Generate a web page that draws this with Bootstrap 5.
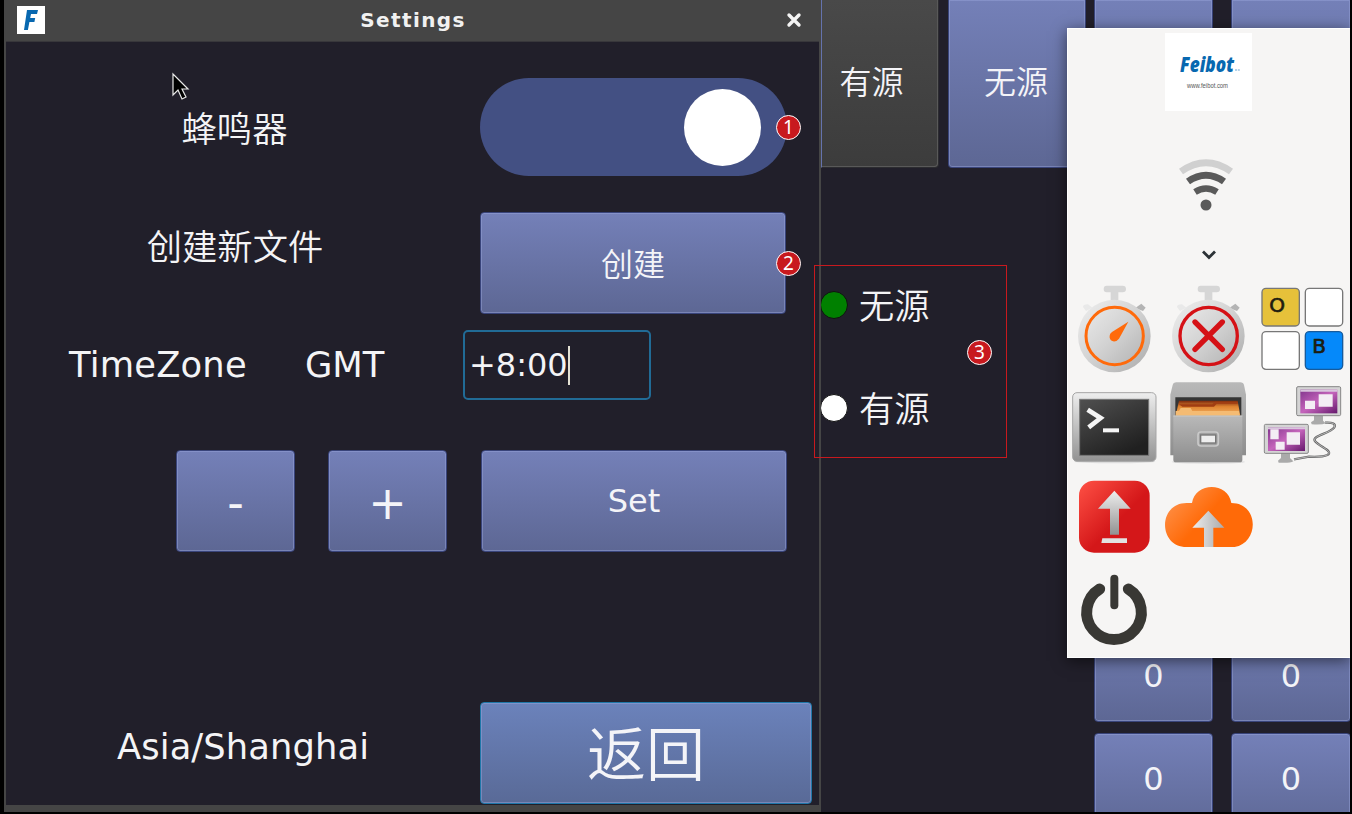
<!DOCTYPE html>
<html lang="zh-CN">
<head>
<meta charset="utf-8">
<meta name="viewport" content="width=device-width, initial-scale=1">
<title>Settings</title>
<link rel="stylesheet" href="https://cdn.jsdelivr.net/npm/bootstrap@5.3.0/dist/css/bootstrap.min.css">
<style>
  body { width: 1352px; height: 814px; background: #000; color: #f4f4f6; font-family: "DejaVu Sans", "Noto Sans CJK SC", sans-serif; font-size: 35.3px; line-height: 1; }
  .cjk { font-family: "Noto Sans CJK SC", sans-serif; font-weight: 350; }
  .win { position: absolute; top: 0; height: 812px; background: #211f2a; }
  /* raised button shared by both windows */
  .key { display: flex; align-items: center; justify-content: center; flex: none; padding: 0; border: 1px solid #39447a; border-radius: 4px; color: #f4f4f8; font-size: 32px; line-height: 1; background: linear-gradient(#7480b8, #5d6794); box-shadow: inset 0 0 0 1px rgba(150,162,215,.5); height: 102px; }
  .key.cjk { padding-bottom: 3px; }
  .key-dark { background: linear-gradient(#494949, #3c3c3c); border-color: #2c2c30; border-left-color: #6573ad; box-shadow: inset -1px -1px 0 #595959; border-radius: 0 0 4px 0; }
  .key-top { height: 168px; border-top: 0; border-top-left-radius: 0; border-top-right-radius: 0; }
  .key-top.cjk { padding-bottom: 7px; }
  .main-app { left: 821px; width: 529px; }
  .modes { width: 265px; gap: 9px; }
  .choice { height: 36px; gap: 11px; }
  .choice b { font-weight: inherit; padding-bottom: 3px; }
  .dot { width: 28px; height: 28px; margin-left: -1px; border: 1px solid #111; border-radius: 50%; background: #fff; }
  .dot.on { background: #008000; }
  .pads { display: grid; grid-template-columns: 119px 120px; column-gap: 18px; margin-left: 8px; }
  .pads-low { margin-top: 451px; row-gap: 11px; }
  .pads-low .key { height: 103px; }
  .dialog { left: 4px; width: 817px; border: solid #454545; border-width: 0 2px 7px; }
  .bar { height: 42px; background: #454545; border-bottom: 1px solid #38373b; }
  .bar h1 { font-size: 20px; font-weight: 700; letter-spacing: 1.4px; line-height: 1; color: #f1f1f1; }
  .toggle { width: 307px; height: 98px; border-radius: 49px; background: #435083; padding-right: 26px; }
  .knob { width: 77px; height: 77px; border-radius: 50%; background: #fff; }
  .tz { width: 188px; height: 70px; border: 2px solid #216b96; border-radius: 5px; font-size: 32px; padding-left: 4px; }
  .caret { width: 2px; height: 39px; background: #e4e1d3; margin-left: 0; }
  .back { width: 332px; font-size: 59px; border-color: #1f77a8; background: linear-gradient(#6b82bb, #596a97); }
  .key.back { padding-bottom: 5px; }
  .cursor { position: absolute; left: 171px; top: 72px; }
  .tools { position: absolute; left: 1067px; top: 28px; width: 283px; height: 630px; background: #f6f5f4; border: 1px solid #fff; border-right: 0; box-shadow: 0 3px 14px rgba(0,0,0,.55); }
  .brand { width: 87px; height: 78px; background: #fff; margin-top: 4px; }
  .launch { display: grid; grid-template-columns: repeat(3, 94px); grid-auto-rows: 94px; margin-left: -1px; }
  .launch svg { width: 94px; height: 94px; }
  .pin { position: absolute; width: 25px; height: 25px; border: 1.5px solid #fff; border-radius: 50%; background: #c8191e; color: #fff; font: 19px/1 "Noto Sans", sans-serif; }
  .frame { position: absolute; left: 814px; top: 265px; width: 193px; height: 193px; border: 1px solid #c8191e; }
</style>
<script src="https://cdn.jsdelivr.net/npm/bootstrap@5.3.0/dist/js/bootstrap.bundle.min.js"></script>
</head>
<body class="position-relative overflow-hidden">

<!-- main application -->
<main class="win main-app d-flex overflow-hidden">
  <section class="d-flex flex-column flex-shrink-0">
    <div class="modes d-flex">
      <button class="key key-top key-dark cjk" style="width:118px;padding-right:17px">有源</button>
      <button class="key key-top cjk" style="width:138px;padding-right:2px">无源</button>
    </div>
    <div class="choice d-flex align-items-center cjk" style="margin-top:119px"><span class="dot on"></span><b>无源</b></div>
    <div class="choice d-flex align-items-center cjk" style="margin-top:67px"><span class="dot"></span><b>有源</b></div>
  </section>
  <section class="flex-shrink-0">
    <div class="pads"><button class="key key-top"></button><button class="key key-top"></button></div>
    <div class="pads pads-low">
      <button class="key" style="padding-top:10px">0</button><button class="key" style="padding-top:10px">0</button>
      <button class="key" style="padding-bottom:12px">0</button><button class="key" style="padding-bottom:12px">0</button>
    </div>
  </section>
</main>

<!-- settings dialog -->
<section class="win dialog">
  <header class="bar d-flex align-items-center">
    <svg width="28" height="28" viewBox="0 0 28 28" style="margin-left:11px;margin-top:-2px"><path fill="#fff" d="M0 0h28v28H0z"/><path fill="#0868b0" d="M10 4h11l-1 4h-6l-.8 4h5l-.8 4h-5l-1.500 8H7z"/></svg>
    <h1 class="m-0 flex-fill text-center" style="padding-right:5px;padding-bottom:2px">Settings</h1>
    <svg width="16" height="16" viewBox="0 0 16 16" style="margin-right:17px;margin-top:-1px"><path d="M3 3l10 10M13 3L3 13" stroke="#f4f4f4" stroke-width="3.4" stroke-linecap="round"/></svg>
  </header>
  <div class="d-flex align-items-center" style="margin-top:36px">
    <div class="text-center cjk" style="width:457px;padding-bottom:1px">蜂鸣器</div>
    <div class="toggle d-flex align-items-center justify-content-end" style="margin-left:17px"><span class="knob"></span></div>
  </div>
  <div class="d-flex" style="margin-top:36px">
    <div class="text-center cjk" style="width:458px;padding-top:15px">创建新文件</div>
    <button class="key cjk" style="width:306px;margin-left:16px">创建</button>
  </div>
  <div class="d-flex align-items-center" style="margin-top:16px">
    <span style="margin-left:63px;width:236px;letter-spacing:.2px">TimeZone</span>
    <span style="width:158px">GMT</span>
    <div class="tz d-flex align-items-center">+8:00<span class="caret"></span></div>
  </div>
  <div class="d-flex" style="margin-top:50px;padding-left:170px;gap:33px">
    <button class="key" style="width:119px;font-size:46px;padding-top:3px">-</button>
    <button class="key" style="width:119px;font-size:46px;padding-top:3px">+</button>
    <button class="key" style="width:306px;margin-left:1px">Set</button>
  </div>
  <div class="d-flex align-items-center" style="margin-top:150px">
    <span style="width:474px;padding-left:111px;padding-bottom:12px;letter-spacing:.1px">Asia/Shanghai</span>
    <button class="key back cjk">返回</button>
  </div>
</section>

<svg class="cursor" width="20" height="30" viewBox="0 0 20 30"><path d="M2 2v21l5-5 4 9 4-2-4-8h6z" fill="#000" stroke="#e8e8e8" stroke-width="1.2"/></svg>

<!-- launcher panel -->
<aside class="tools">
  <div class="d-flex flex-column align-items-center" style="height:253px;width:281px">
    <svg class="brand" viewBox="0 0 87 78"><text x="15" y="39" font-family="Open Sans, sans-serif" font-weight="800" font-style="italic" font-size="21" textLength="54" lengthAdjust="spacingAndGlyphs" fill="#0868b0">Feibot</text><path d="M70 37h5" stroke="#9cc3e2" stroke-width="1.500" stroke-dasharray="2 .8"/><text x="22" y="55" font-family="Liberation Sans, sans-serif" font-size="6.5" textLength="41" lengthAdjust="spacingAndGlyphs" fill="#555">www.feibot.com</text></svg>
    <svg width="54" height="54" viewBox="0 0 54 54" style="margin-top:48px;margin-right:6px" fill="none" stroke="#5a5a5a">
      <path stroke="#d0d0d0" stroke-width="7" d="M2 12.500Q27-5 52 12.500"/>
      <path stroke-width="7" d="M9 22.500Q27 10 45 22.500"/>
      <path stroke-width="6.500" d="M16 33Q27 26 38 33"/>
      <circle cx="27" cy="46" r="5.500" fill="#5a5a5a" stroke="none"/>
    </svg>
    <svg width="18" height="12" viewBox="0 0 18 12" style="margin-top:36px"><path d="M3 2.500l6 6 6-6" fill="none" stroke="#2c3236" stroke-width="2.800"/></svg>
  </div>
  <svg width="0" height="0" class="position-absolute">
    <defs>
      <linearGradient id="silver"><stop stop-color="#ededed"/><stop offset="1" stop-color="#aaa"/></linearGradient>
      <linearGradient id="casing" x2="1" y2="1"><stop stop-color="#f0f0f0"/><stop offset=".5" stop-color="#d2d2d2"/><stop offset="1" stop-color="#aaa"/></linearGradient>
      <linearGradient id="metal" x2="0" y2="1"><stop stop-color="#eee"/><stop offset="1" stop-color="#929292"/></linearGradient>
      <linearGradient id="drawer" x2="0" y2="1"><stop stop-color="#b9b9b9"/><stop offset="1" stop-color="#8d8d8d"/></linearGradient>
      <linearGradient id="screen" x2=".6" y2="1"><stop stop-color="#505050"/><stop offset="1" stop-color="#202020"/></linearGradient>
      <linearGradient id="paper" x2="0" y2="1"><stop stop-color="#7b270c"/><stop offset=".4" stop-color="#df8430"/><stop offset="1" stop-color="#f4b567"/></linearGradient>
      <linearGradient id="red" x2=".7" y2=".7"><stop stop-color="#ff5145"/><stop offset=".8" stop-color="#d41719"/></linearGradient>
      <linearGradient id="orange" x2=".8" y2=".5"><stop stop-color="#ff9b5a"/><stop offset=".7" stop-color="#ff6a08"/></linearGradient>
      <linearGradient id="violet" x2="1" y2="1"><stop stop-color="#81358c"/><stop offset=".5" stop-color="#c565bc"/><stop offset="1" stop-color="#65186c"/></linearGradient>
      <g id="watch">
        <path fill="#d6d6d6" d="M140 32h48q10 0 10 10t-10 10h-13v24h-23V52h-12q-9 0-9-10t9-10z"/>
        <path fill="#e9e9e9" d="M78 108l-9-12q0-8 15-8l13 10z"/><path fill="#b4b4b4" d="M249 108l8-10-13-12-18 13z"/>
        <circle cx="163" cy="183" r="109" fill="url(#casing)"/>
      </g>
    </defs>
  </svg>
  <div class="launch">
    <svg viewBox="21 21 282 282"><use href="#watch"/><circle cx="164" cy="183" r="86" fill="none" stroke="#ff6a0b" stroke-width="9"/><path fill="#ff6a0b" d="M205 140l-28 51q-8 10-18 8-12-5-10-17 0-6 7-11z"/></svg>
    <svg viewBox="303 21 282 282"><use href="#watch" x="282"/><circle cx="446" cy="183" r="86" fill="none" stroke="#d51116" stroke-width="10"/><path stroke="#d51116" stroke-width="16" stroke-linecap="round" d="M405 141l82 82M487 141l-82 82"/></svg>
    <svg viewBox="585 21 282 282" stroke="#777" stroke-width="4"><rect x="606" y="40" width="112" height="113" rx="12" fill="#e6c13a"/><rect x="736" y="40" width="112" height="113" rx="12" fill="#fff"/><rect x="606" y="170" width="112" height="113" rx="12" fill="#fff"/><rect x="736" y="170" width="112" height="113" rx="12" fill="#0589fa" stroke="#175b9c"/><g font-family="DejaVu Sans, sans-serif" font-size="60" fill="#1c1c10" stroke="#1c1c10" stroke-width="2"><text x="628" y="110">O</text><text x="757" y="235">B</text></g></svg>

    <svg viewBox="21 303 282 282"><ellipse cx="164" cy="560" rx="122" ry="5" fill="#ddd"/><rect x="38" y="353" width="250" height="206" rx="13" fill="url(#metal)" stroke="#a5a5a5" stroke-width="3"/><rect x="59" y="373" width="207" height="168" fill="url(#screen)" stroke="#777" stroke-width="3"/><path d="M83 404l39 25-36 28" fill="none" stroke="#f5f5f5" stroke-width="14"/><path d="M129 466h48" stroke="#f5f5f5" stroke-width="12"/></svg>
    <svg viewBox="303 303 282 282"><ellipse cx="445" cy="561" rx="110" ry="5" fill="#ddd"/><path d="M349 322h192q9 0 11 8l6 29v182H331V359l7-29q2-8 11-8z" fill="url(#drawer)"/><path d="M346 367h198v170H346z" fill="#353535"/><path d="M357 377h176l8 45H347z" fill="url(#paper)"/><path d="M357 388h100l8-8h68v6h-63l-8 9h-95z" fill="#a03d12"/><path d="M347 408h10l5-9h30l5 9h140v14H347z" fill="#f4bb73"/><path d="M340 422h207v132q0 8-8 8H348q-8 0-8-8z" fill="url(#drawer)"/><path d="M340 423h207" stroke="#c9c9c9" stroke-width="3"/><rect x="414" y="471" width="61" height="42" rx="9" fill="#a0a0a0" stroke="#c9c9c9" stroke-width="5"/><rect x="422" y="480" width="45" height="24" fill="#eee" stroke="#777" stroke-width="4"/></svg>
    <svg viewBox="585 303 282 282">
      <path d="M795 443q36-2 28 14c-12 18-66 25-59 40 12 18 59 31 38 43q-15 7-55 5l-45 8" fill="none" stroke="#666" stroke-width="7"/><path d="M795 443q36-2 28 14c-12 18-66 25-59 40 12 18 59 31 38 43q-15 7-55 5l-45 8" fill="none" stroke="#ddd" stroke-width="2"/>
      <path fill="#aaa" d="M762 422h27v15l8 8q-10 5-42 3l-2-6 9-6zM663 534h27v15l10 10q-10 6-44 4l-2-6 9-8z"/>
      <g id="crt"><rect x="710" y="335" width="132" height="87" rx="4" fill="#d4d4d4" stroke="#888" stroke-width="3"/><rect x="721" y="344" width="111" height="71" fill="url(#violet)"/><path fill="#d9c6dd" d="M721 344h111v6H721z"/></g>
      <path fill="#f3edf4" d="M776 358h42v37h-42zM735 377h30v25h-30z"/>
      <use href="#crt" x="-97" y="113"/>
      <path fill="#f3edf4" d="M680 472h40v37h-40zM631 463h25v30h-25zM647 500h27v24h-27z"/>
    </svg>

    <svg viewBox="21 0 282 282"><rect x="57" y="32" width="212" height="216" rx="45" fill="url(#red)"/><path fill="url(#metal)" d="M163 62l49 54h-35v78h-27v-78h-36z"/><path fill="#e2e2e2" d="M127 205h74v14h-77z"/></svg>
    <svg viewBox="303 0 282 282"><path fill="url(#orange)" d="M380 231c-86 0-87-132 0-132h16c10-64 108-64 118 0 84 0 84 120 10 132z"/><path fill="url(#silver)" d="M445 122l48 51h-33v58h-28v-58h-35z"/></svg>
    <span></span>

    <svg viewBox="21 282 282 282"><g fill="none" stroke="#393834" stroke-linecap="round"><path stroke-width="33" d="M119 357a82 82 0 1 0 86 0"/><path stroke-width="24" d="M163 326v80"/></g></svg>
  </div>
</aside>

<!-- numbered callouts -->
<div class="frame"></div>
<span class="pin d-flex align-items-center justify-content-center" style="left:776px;top:115px">1</span>
<span class="pin d-flex align-items-center justify-content-center" style="left:776px;top:251px">2</span>
<span class="pin d-flex align-items-center justify-content-center" style="left:967px;top:340px">3</span>
</body>
</html>
